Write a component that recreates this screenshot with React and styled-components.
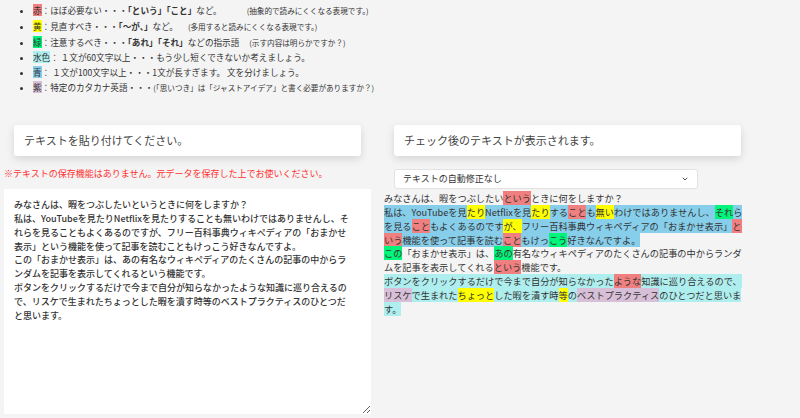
import styled, { createGlobalStyle } from "styled-components";

const GlobalStyle = createGlobalStyle`
  body {
    margin: 0;
    background-color: #f4f4f4;
    font-family: "Noto Sans CJK JP", "Noto Sans", sans-serif;
    color: #333;
  }
`;

const tones = {
  none: "transparent",
  red: "#f08080",
  yellow: "#ffff00",
  green: "#00f57a",
  cyan: "#afeeee",
  blue: "#87ceeb",
  purple: "#d8bfd8",
};

const Page = styled.div`
  padding: 0 4px;
`;

const Legend = styled.ul`
  margin: 0;
  padding: 3px 0 0 29px;
  font-size: 8.6px;
  line-height: 14.8px;
  list-style: disc;
`;

const LegendItem = styled.li``;

const Mark = styled.span`
  background-color: ${(p) => tones[p.$tone]};
`;

const Strong = styled.b`
  font-weight: 700;
`;

const Note = styled.span`
  font-size: 7.6px;
  margin-left: ${(p) => p.$gap || 0}px;
`;

const Columns = styled.div`
  display: flex;
  align-items: flex-start;
  gap: 13px;
  margin-top: 29px;
`;

const Column = styled.div`
  width: 367px;
  display: flex;
  flex-direction: column;
`;

const Card = styled.div`
  margin: 0 10px;
  height: 31px;
  display: flex;
  align-items: center;
  padding: 0 10px;
  background-color: #fff;
  border-radius: 3px;
  box-shadow: 0 3px 8px rgba(0, 0, 0, 0.13);
  font-size: 11px;
  color: #444;
`;

const Warning = styled.div`
  margin-top: 11px;
  font-size: 9px;
  line-height: 14px;
  color: #ff3030;
`;

const Input = styled.textarea`
  margin-top: 8px;
  box-sizing: border-box;
  width: 367px;
  height: 225px;
  padding: 9px 22px 10px 10px;
  border: none;
  outline: none;
  background-color: #fff;
  font-family: "Noto Sans CJK JP", sans-serif;
  font-size: 9px;
  font-weight: 500;
  line-height: 13.9px;
  color: #333;
`;

const Select = styled.div`
  margin: 13px 0 0 10px;
  box-sizing: border-box;
  width: 304px;
  height: 20px;
  display: flex;
  align-items: center;
  justify-content: space-between;
  padding: 0 8px;
  background-color: #fff;
  border: 1px solid #e2e2e2;
  border-radius: 3px;
  font-size: 9px;
  color: #333;
`;

const Output = styled.div`
  margin-top: 3px;
  width: 362px;
  font-size: 9.2px;
  line-height: 13.3px;
  color: #333;
`;

const Para = styled.div`
  line-height: 13.9px;
`;

const source = [
  "みなさんは、暇をつぶしたいというときに何をしますか？",
  "私は、YouTubeを見たりNetflixを見たりすることも無いわけではありませんし、それらを見ることもよくあるのですが、フリー百科事典ウィキペディアの「おまかせ表示」という機能を使って記事を読むこともけっこう好きなんですよ。",
  "この「おまかせ表示」は、あの有名なウィキペディアのたくさんの記事の中からランダムを記事を表示してくれるという機能です。",
  "ボタンをクリックするだけで今まで自分が知らなかったような知識に巡り合えるので、リスケで生まれたちょっとした暇を潰す時等のベストプラクティスのひとつだと思います。",
].join("\n");

// each sentence: [tone, text] pieces
const checked = [
  [
    ["none", "みなさんは、暇をつぶしたい"],
    ["red", "という"],
    ["none", "ときに何をしますか？"],
  ],
  [
    ["blue", "私は、YouTubeを見"],
    ["yellow", "たり"],
    ["blue", "Netflixを見"],
    ["yellow", "たり"],
    ["blue", "する"],
    ["red", "こと"],
    ["blue", "も"],
    ["yellow", "無い"],
    ["blue", "わけではありませんし、"],
    ["green", "それ"],
    ["blue", "らを見る"],
    ["red", "こと"],
    ["blue", "もよくあるのです"],
    ["yellow", "が、"],
    ["blue", "フリー百科事典ウィキペディアの「おまかせ表示」"],
    ["red", "という"],
    ["blue", "機能を使って記事を読む"],
    ["red", "こと"],
    ["blue", "もけっ"],
    ["green", "こう"],
    ["blue", "好きなんですよ。"],
  ],
  [
    ["green", "この"],
    ["none", "「おまかせ表示」は、"],
    ["green", "あの"],
    ["none", "有名なウィキペディアのたくさんの記事の中からランダムを記事を表示してくれる"],
    ["red", "という"],
    ["none", "機能です。"],
  ],
  [
    ["cyan", "ボタンをクリックするだけで今まで自分が知らなかった"],
    ["red", "ような"],
    ["cyan", "知識に巡り合えるので、"],
    ["purple", "リスケ"],
    ["cyan", "で生まれた"],
    ["yellow", "ちょっと"],
    ["cyan", "した暇を潰す時"],
    ["yellow", "等"],
    ["cyan", "の"],
    ["purple", "ベストプラクティス"],
    ["cyan", "のひとつだと思います。"],
  ],
];

const Chevron = () => (
  <svg width="8" height="8" viewBox="0 0 24 24" fill="none" stroke="#555" strokeWidth="3" strokeLinecap="round" strokeLinejoin="round">
    <path d="M6 9l6 6 6-6" />
  </svg>
);

const App = () => {
  return (
    <Page>
      <GlobalStyle />
      <Legend>
        <LegendItem>
          <Mark $tone="red">赤</Mark>：ほぼ必要ない・・・<Strong>「という」「こと」</Strong>など。
          <Note $gap={25}>(抽象的で読みにくくなる表現です。)</Note>
        </LegendItem>
        <LegendItem>
          <Mark $tone="yellow">黄</Mark>：見直すべき・・・<Strong>「～が、」</Strong>など。
          <Note $gap={10}>(多用すると読みにくくなる表現です。)</Note>
        </LegendItem>
        <LegendItem>
          <Mark $tone="green">緑</Mark>：注意するべき・・・<Strong>「あれ」「それ」</Strong>などの指示語
          <Note $gap={10}>(示す内容は明らかですか？)</Note>
        </LegendItem>
        <LegendItem>
          <Mark $tone="cyan">水色</Mark>： １文が60文字以上・・・もう少し短くできないか考えましょう。
        </LegendItem>
        <LegendItem>
          <Mark $tone="blue">青</Mark>： １文が100文字以上・・・1文が長すぎます。 文を分けましょう。
        </LegendItem>
        <LegendItem>
          <Mark $tone="purple">紫</Mark>：特定のカタカナ英語・・・
          <Note>(「思いつき」は「ジャストアイデア」と書く必要がありますか？)</Note>
        </LegendItem>
      </Legend>

      <Columns>
        <Column>
          <Card>テキストを貼り付けてください。</Card>
          <Warning>※テキストの保存機能はありません。元データを保存した上でお使いください。</Warning>
          <Input defaultValue={source} />
        </Column>

        <Column>
          <Card>チェック後のテキストが表示されます。</Card>
          <Select>
            <span>テキストの自動修正なし</span>
            <Chevron />
          </Select>
          <Output>
            {checked.map((sentence, i) => (
              <Para key={i}>
                {sentence.map(([tone, text], j) => (
                  <Mark key={j} $tone={tone}>
                    {text}
                  </Mark>
                ))}
              </Para>
            ))}
          </Output>
        </Column>
      </Columns>
    </Page>
  );
};

export default App;
